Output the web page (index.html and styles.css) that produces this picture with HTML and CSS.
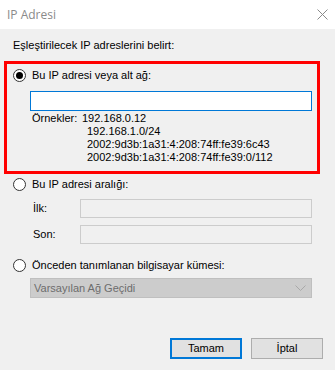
FILE: index.html
```html
<!DOCTYPE html>
<html lang="tr">
<head>
    <meta charset="UTF-8">
    <title>IP Adresi</title>
    <link rel="stylesheet" href="styles.css">
</head>
<body>
    <div class="titlebar">
        <span class="title">IP Adresi</span>
        <svg class="close" width="11" height="11" viewBox="0 0 11 11">
            <path d="M0.5 0.5 L10.5 10.5 M10.5 0.5 L0.5 10.5" stroke="#8a8a8a" stroke-width="1" fill="none"/>
        </svg>
    </div>

    <div class="dialog">
        <p class="intro">Eşleştirilecek IP adreslerini belirt:</p>

        <div class="group">
            <div class="radio-row">
                <span class="radio checked"></span>
                <span>Bu IP adresi veya alt ağ:</span>
            </div>
            <div class="textbox active"></div>
            <div class="examples">
                <span class="ex-label">Örnekler:</span>
                <div class="ex-values">
                    <div class="first">192.168.0.12</div>
                    <div>192.168.1.0/24</div>
                    <div>2002:9d3b:1a31:4:208:74ff:fe39:6c43</div>
                    <div>2002:9d3b:1a31:4:208:74ff:fe39:0/112</div>
                </div>
            </div>
        </div>

        <div class="radio-row outside">
            <span class="radio"></span>
            <span>Bu IP adresi aralığı:</span>
        </div>
        <div class="field-row first-field">
            <span class="field-label">İlk:</span>
            <div class="textbox disabled"></div>
        </div>
        <div class="field-row second-field">
            <span class="field-label">Son:</span>
            <div class="textbox disabled"></div>
        </div>

        <div class="radio-row outside third">
            <span class="radio"></span>
            <span>Önceden tanımlanan bilgisayar kümesi:</span>
        </div>
        <div class="select">
            <span>Varsayılan Ağ Geçidi</span>
            <svg width="11" height="6" viewBox="0 0 11 6">
                <path d="M0.5 0.5 L5.5 5.5 L10.5 0.5" stroke="#a8a8a8" stroke-width="1" fill="none"/>
            </svg>
        </div>

        <div class="buttons">
            <div class="button default">Tamam</div>
            <div class="button">İptal</div>
        </div>
    </div>
</body>
</html>
```

FILE: styles.css
```css
body {
    margin: 0;
    width: 335px;
    height: 370px;
    overflow: hidden;
    background-color: #f0f0f0;
    font-family: 'Liberation Sans', Arial, sans-serif;
    font-size: 11px;
    color: #000000;
}
.titlebar {
    height: 29px;
    background-color: #ffffff;
    display: flex;
    align-items: center;
    justify-content: space-between;
    padding: 0 7px 0 7px;
}
.title {
    font-family: 'Open Sans', sans-serif;
    font-size: 12px;
    color: #8a8a8a;
}
.close {
    margin-top: 0;
    margin-right: 0;
}
.dialog {
    line-height: 13px;
}
.intro {
    margin: 0;
    padding: 10px 0 0 13px;
}
.group {
    box-sizing: border-box;
    width: 316px;
    height: 113px;
    margin: 9px 0 0 4px;
    border: 3px solid #ff0000;
    padding: 5px 0 0 6px;
}
.radio-row {
    display: flex;
    align-items: center;
    gap: 6px;
    height: 13px;
}
.radio {
    box-sizing: border-box;
    width: 13px;
    height: 13px;
    border: 1px solid #333333;
    border-radius: 50%;
    background-color: #ffffff;
    display: flex;
    align-items: center;
    justify-content: center;
}
.radio.checked::after {
    content: '';
    width: 7px;
    height: 7px;
    border-radius: 50%;
    background-color: #000000;
}
.textbox {
    box-sizing: border-box;
    height: 20px;
    border: 1px solid #cccccc;
}
.textbox.active {
    width: 282px;
    margin: 9px 0 0 17px;
    background-color: #ffffff;
    border-color: #0078d7;
}
.examples {
    display: flex;
    margin: 1px 0 0 19px;
}
.ex-label {
    width: 50px;
}
.ex-values div {
    padding-left: 5px;
}
.ex-values .first {
    padding-left: 0;
}
.outside {
    margin: 4px 0 0 13px;
}
.field-row {
    display: flex;
    align-items: center;
    margin-left: 33px;
}
.field-row .textbox {
    width: 232px;
    height: 19px;
    background-color: #f0f0f0;
}
.field-label {
    width: 47px;
}
.first-field {
    margin-top: 8px;
}
.second-field {
    margin-top: 7px;
}
.third {
    margin-top: 15px;
}
.select {
    box-sizing: border-box;
    width: 282px;
    height: 20px;
    margin: 6px 0 0 30px;
    background-color: #cccccc;
    border: 1px solid #bfbfbf;
    color: #6d6d6d;
    display: flex;
    align-items: center;
    justify-content: space-between;
    padding: 0 5px 0 3px;
}
.buttons {
    display: flex;
    justify-content: flex-end;
    gap: 9px;
    margin: 40px 12px 0 0;
}
.button {
    box-sizing: border-box;
    width: 72px;
    height: 21px;
    background-color: #e1e1e1;
    border: 1px solid #adadad;
    display: flex;
    align-items: center;
    justify-content: center;
}
.button.default {
    border: 2px solid #0078d7;
}
```
